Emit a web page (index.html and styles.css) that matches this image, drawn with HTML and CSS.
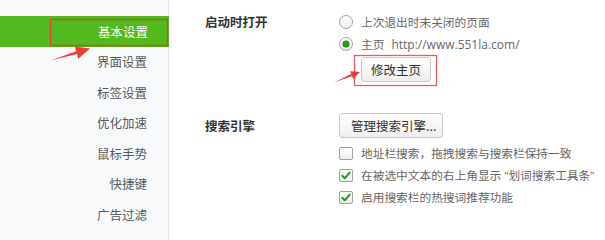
FILE: index.html
```html
<!DOCTYPE html>
<html lang="zh-CN">
<head>
<meta charset="utf-8">
<title>基本设置</title>
<link rel="stylesheet" href="styles.css">
</head>
<body>
<div class="page">
  <aside class="sidebar">
    <ul class="nav">
      <li class="nav-item active">基本设置</li>
      <li class="nav-item">界面设置</li>
      <li class="nav-item">标签设置</li>
      <li class="nav-item">优化加速</li>
      <li class="nav-item">鼠标手势</li>
      <li class="nav-item">快捷键</li>
      <li class="nav-item">广告过滤</li>
    </ul>
  </aside>
  <main class="content">
    <section class="group group-startup">
      <div class="label">启动时打开</div>
      <div class="controls">
        <div class="opt"><span class="radio"></span><span class="opt-text">上次退出时未关闭的页面</span></div>
        <div class="opt"><span class="radio on"></span><span class="opt-text">主页</span><span class="url">http://www.551la.com/</span></div>
        <button class="btn btn-home">修改主页</button>
      </div>
    </section>
    <section class="group group-search">
      <div class="label label-search">搜索引擎</div>
      <div class="controls">
        <button class="btn btn-engine">管理搜索引擎...</button>
        <div class="opt opt-check"><span class="check"></span><span class="opt-text">地址栏搜索，拖拽搜索与搜索栏保持一致</span></div>
        <div class="opt opt-check"><span class="check on"><svg viewBox="0 0 14 13" width="14" height="13"><path d="M3.2 6.8 L5.8 9.3 L10.6 3.6" fill="none" stroke="#1f9a1f" stroke-width="2" stroke-linecap="round" stroke-linejoin="round"/></svg></span><span class="opt-text">在被选中文本的右上角显示<span class="q"> “</span>划词搜索工具条<span class="q">”</span></span></div>
        <div class="opt opt-check"><span class="check on"><svg viewBox="0 0 14 13" width="14" height="13"><path d="M3.2 6.8 L5.8 9.3 L10.6 3.6" fill="none" stroke="#1f9a1f" stroke-width="2" stroke-linecap="round" stroke-linejoin="round"/></svg></span><span class="opt-text">启用搜索栏的热搜词推荐功能</span></div>
      </div>
    </section>
  </main>
  <svg class="annotations" width="605" height="240" viewBox="0 0 605 240">
    <rect x="50.5" y="19.5" width="117" height="26" fill="none" stroke="#e2403c" stroke-width="1.3"/>
    <polygon points="50.5,60.5 76.2,51.2 74.9,46.6 90,48.5 78.3,58.8 77,54" fill="#ee3b3b"/>
    <rect x="354.5" y="55.5" width="82" height="30" fill="none" stroke="#ee5a5a" stroke-width="1.3"/>
    <polygon points="334,82.5 351.2,74.1 350.2,71.3 360,72 353.1,79.1 352,76.3" fill="#ee3b3b"/>
  </svg>
</div>
</body>
</html>
```

FILE: styles.css
```css
* { box-sizing: border-box; }
html, body { margin: 0; padding: 0; }
body {
  background: #fff;
  font-family: "Noto Sans CJK SC", "Noto Sans", sans-serif;
  width: 605px;
  height: 240px;
  overflow: hidden;
}
.page {
  position: relative;
  display: flex;
  width: 605px;
  height: 240px;
  overflow: hidden;
}
.sidebar {
  width: 169px;
  flex: none;
  background: #f8f9fb;
  border-right: 1px solid #e2e4e8;
  padding-top: 16px;
}
.nav {
  list-style: none;
  margin: 0;
  padding: 0;
}
.nav-item {
  height: 30.5px;
  line-height: 30.5px;
  text-align: right;
  padding-right: 21px;
  font-size: 12.5px;
  color: #555a60;
}
.nav-item.active {
  background: #54b81f;
  color: #fff;
  height: 31px;
  line-height: 31px;
  margin-right: -1px;
}
.content {
  flex: none;
  width: 436px;
  padding-left: 36px;
  padding-top: 11px;
}
.group {
  display: flex;
}
.label {
  width: 134px;
  flex: none;
  font-size: 12.5px;
  font-weight: bold;
  color: #333;
  line-height: 22px;
}
.controls {
  display: flex;
  flex-direction: column;
  align-items: flex-start;
  flex: none;
}
.opt {
  display: flex;
  align-items: center;
  height: 22px;
  font-size: 11.7px;
  color: #666;
  white-space: nowrap;
}
.opt-text { line-height: 22px; white-space: pre; }
.q {
  font-family: "Liberation Sans", sans-serif;
}
.url {
  margin-left: 7px;
  font-family: "Open Sans", "Liberation Sans", sans-serif;
  font-size: 12px;
  color: #666;
}
.radio {
  width: 14px;
  height: 14px;
  border-radius: 50%;
  border: 1px solid #a4a4a4;
  background: linear-gradient(#ffffff, #ececec);
  margin-right: 8px;
  position: relative;
  flex: none;
}
.radio.on::after {
  content: "";
  position: absolute;
  left: 3px;
  top: 3px;
  width: 6px;
  height: 6px;
  border-radius: 50%;
  background: #22a21c;
  box-shadow: 0 0 0 0.5px #1b7f16;
}
.btn {
  font-family: "Noto Sans CJK SC", "Noto Sans", sans-serif;
  font-size: 12.5px;
  color: #333;
  border: 1px solid #c9c9c9;
  border-radius: 3px;
  background: linear-gradient(#ffffff, #eeeeee);
  padding: 0;
  margin: 0;
  white-space: nowrap;
}
.btn-home {
  width: 70px;
  height: 25px;
  margin-left: 22px;
  margin-top: 2px;
}
.group-search {
  margin-top: 31px;
}
.label-search {
  line-height: 25px;
}
.btn-engine {
  width: 104px;
  height: 25px;
  text-align: left;
  padding-left: 11px;
  margin-bottom: 4px;
}
.check {
  width: 14px;
  height: 13px;
  border: 1px solid #a0a0a0;
  border-radius: 2px;
  background: linear-gradient(#ffffff, #efefef);
  margin-right: 8px;
  flex: none;
  position: relative;
}
.check svg {
  position: absolute;
  left: -1px;
  top: -1px;
}
.annotations {
  position: absolute;
  left: 0;
  top: 0;
  pointer-events: none;
}
```
